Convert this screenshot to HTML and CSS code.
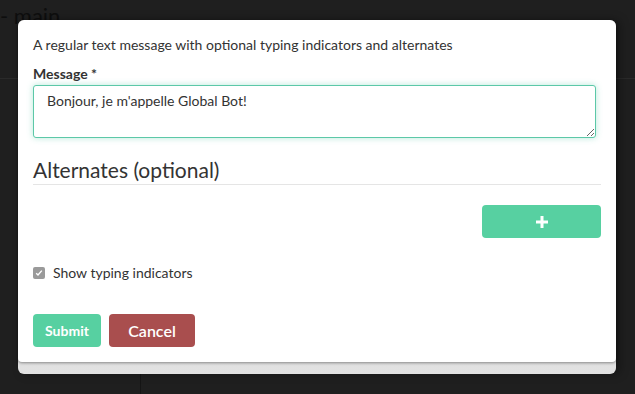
FILE: index.html
```html
<!DOCTYPE html>
<html lang="en">
  <head>
    <meta charset="UTF-8" />
    <meta name="viewport" content="width=device-width, initial-scale=1" />
    <title>Edit message</title>
    <link rel="stylesheet" href="styles.css">
  </head>
  <body>
    <header class="app-header"><span class="app-title">- main</span></header>
    <div class="app-body">
      <aside class="app-sidebar"></aside>
      <main class="app-main"></main>
    </div>

    <div class="modal" role="dialog" aria-label="Text message">
      <div class="modal-content">
        <p class="intro">A regular text message with optional typing indicators and alternates</p>
        <label class="field-label" for="message">Message *</label>
        <textarea id="message" class="message-input">Bonjour, je m'appelle Global Bot!</textarea>

        <h3 class="section-title">Alternates (optional)</h3>
        <div class="alt-actions">
          <button class="btn btn-add" type="button" aria-label="Add alternate">
            <svg width="12" height="12" viewBox="0 0 12 12"><path d="M4.5 0h3v4.5H12v3H7.5V12h-3V7.5H0v-3h4.5z" fill="#fff"/></svg>
          </button>
        </div>

        <label class="check-row">
          <span class="check-box">
            <svg width="8" height="8" viewBox="0 0 8 8"><path d="M1.2 4.2l1.8 1.8 3.8-4.4" fill="none" stroke="#fff" stroke-width="1.4"/></svg>
          </span>
          Show typing indicators
        </label>

        <div class="form-actions">
          <button class="btn btn-submit" type="button">Submit</button>
          <button class="btn btn-cancel" type="button">Cancel</button>
        </div>
      </div>
    </div>
  </body>
</html>
```

FILE: styles.css
```css
  body {
    font-family: Lato, 'Open Sans', sans-serif;
    margin: 0;
    background: #1f1f1f;
    color: #333;
    height: 394px;
    overflow: hidden;
  }

  .app-header {
    height: 79px;
    border-bottom: 1px solid #2a2a2a;
    box-sizing: border-box;
    overflow: hidden;
  }

  .app-title {
    display: inline-block;
    margin-left: 0;
    margin-top: 2px;
    font-size: 22px;
    color: #0e0e0e;
  }

  .app-body {
    display: flex;
    height: 315px;
  }

  .app-sidebar {
    width: 140px;
    border-right: 1px solid #151515;
  }

  .modal {
    position: absolute;
    top: 20px;
    left: 18px;
    width: 598px;
    border-radius: 6px;
    background: linear-gradient(#7e7e7e, #c4c4c4 40%, #e2e2e2);
    padding-bottom: 12px;
    box-shadow: 4px 0 10px rgba(0, 0, 0, 0.35);
  }

  .modal-content {
    background: white;
    border-radius: 6px 6px 4px 4px;
    padding: 16px 15px 15px;
    box-shadow: 0 1px 3px rgba(0, 0, 0, 0.4);
  }

  .intro {
    margin: 0 0 11px;
    font-size: 14px;
    line-height: 18px;
  }

  .field-label {
    display: block;
    font-weight: 700;
    font-size: 14px;
    line-height: 18px;
    margin-bottom: 2px;
  }

  .message-input {
    display: block;
    box-sizing: border-box;
    width: 563px;
    height: 53px;
    margin: 0;
    padding: 6px 13px;
    font-family: Lato, 'Open Sans', sans-serif;
    font-size: 14px;
    line-height: 17px;
    color: #333;
    border: 1px solid #5cc8a8;
    border-radius: 3px;
    box-shadow: 0 0 6px rgba(92, 205, 170, 0.45);
    outline: none;
    resize: vertical;
  }

  .section-title {
    margin: 20px 0 0;
    padding-bottom: 2px;
    font-size: 21px;
    line-height: 24px;
    font-weight: 400;
    border-bottom: 1px solid #e5e5e5;
  }

  .alt-actions {
    display: flex;
    justify-content: flex-end;
    margin-top: 20px;
  }

  .btn {
    border: none;
    border-radius: 4px;
    color: white;
    font-family: Lato, 'Open Sans', sans-serif;
    cursor: pointer;
  }

  .btn-add {
    width: 119px;
    height: 33px;
    background: #57d0a1;
    display: flex;
    align-items: center;
    justify-content: center;
  }

  .check-row {
    display: flex;
    align-items: center;
    gap: 8px;
    margin-top: 26px;
    font-size: 14px;
    line-height: 18px;
  }

  .check-box {
    width: 12px;
    height: 12px;
    border-radius: 2px;
    background: #9a9a9a;
    display: flex;
    align-items: center;
    justify-content: center;
  }

  .form-actions {
    display: flex;
    gap: 8px;
    margin-top: 32px;
  }

  .btn-submit {
    width: 68px;
    height: 33px;
    background: #57d0a1;
    font-size: 14px;
    font-weight: 700;
  }

  .btn-cancel {
    width: 86px;
    height: 33px;
    background: #a94e4e;
    font-size: 16px;
    font-weight: 600;
  }
```
